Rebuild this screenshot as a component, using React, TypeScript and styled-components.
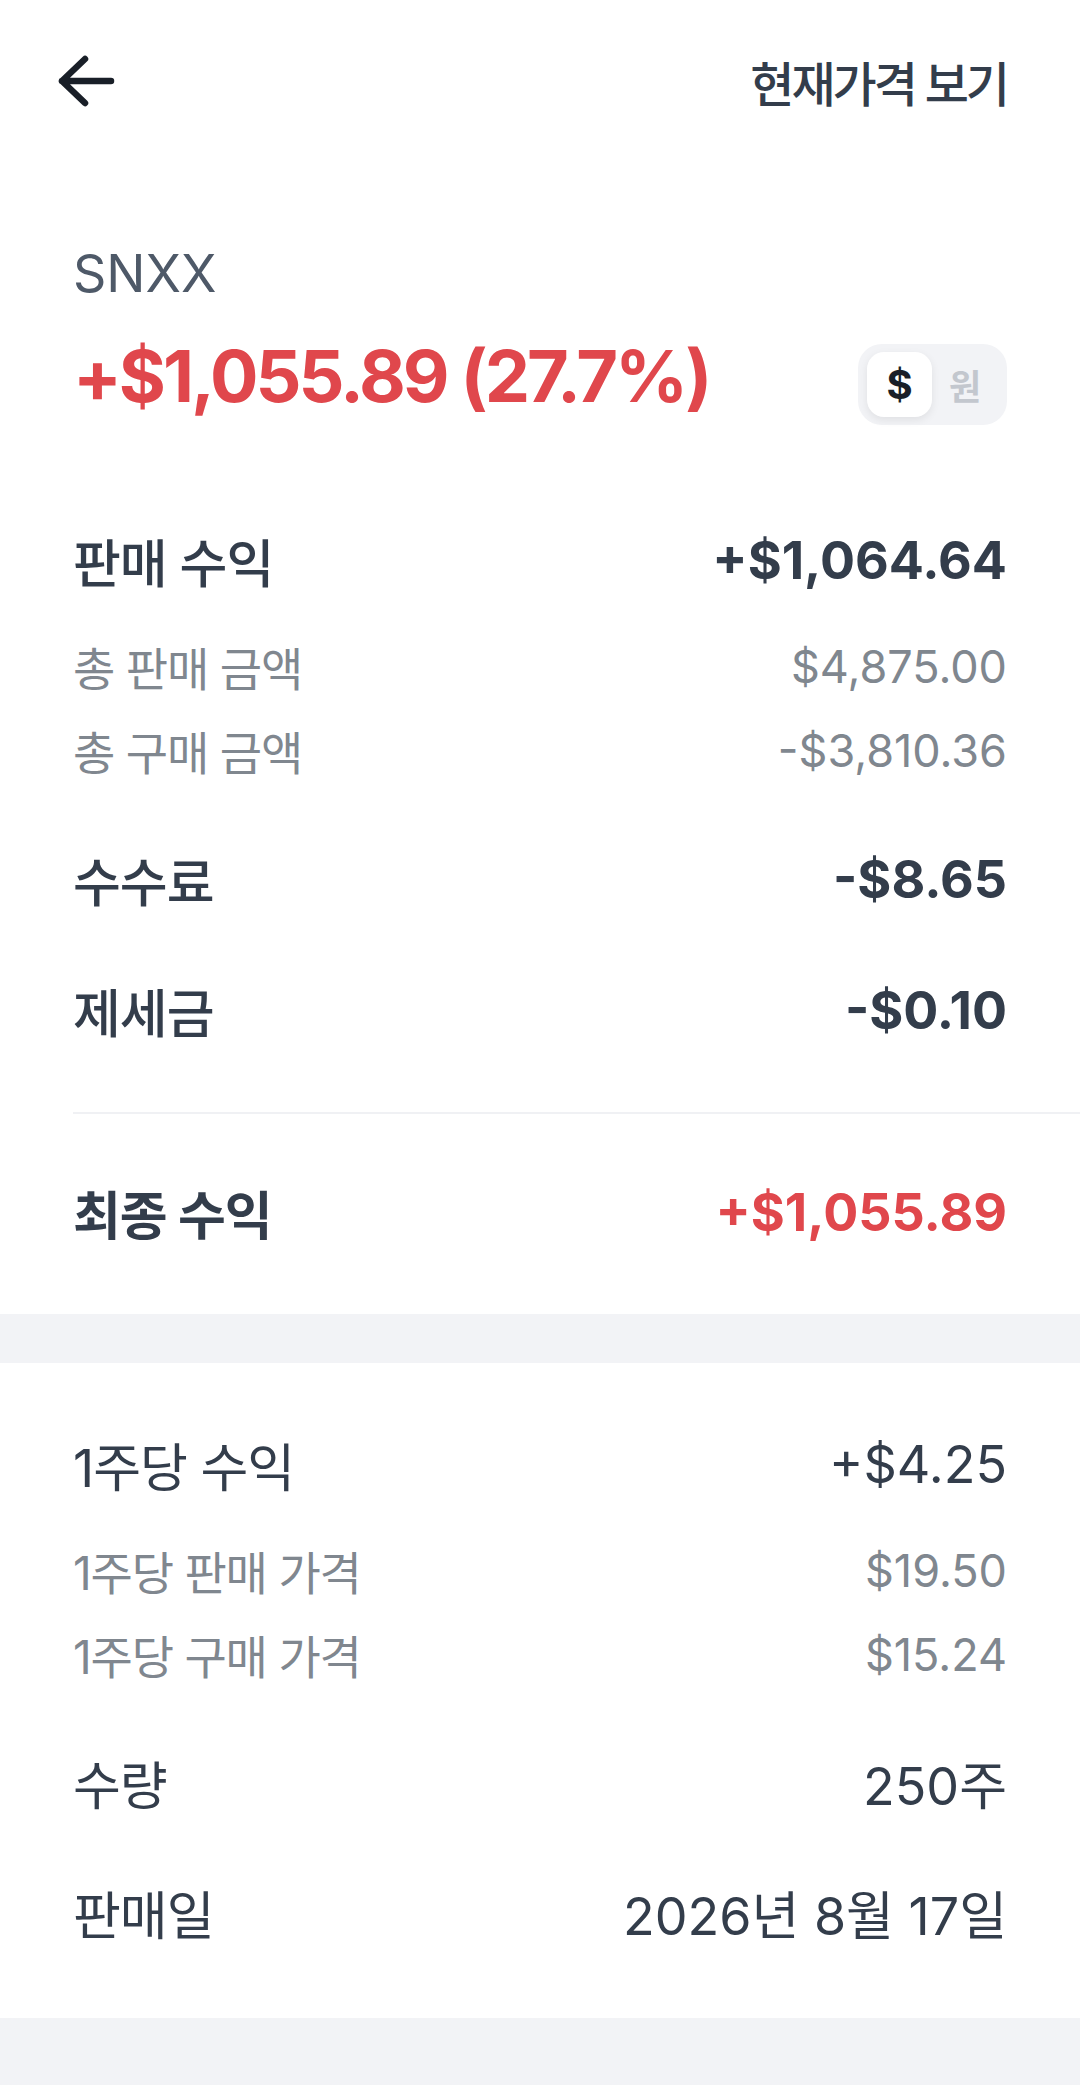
import styled, { createGlobalStyle } from "styled-components";

const GlobalStyle = createGlobalStyle`
  body {
    margin: 0;
    background: #ffffff;
    font-family: Inter, "Noto Sans CJK KR", sans-serif;
    -webkit-font-smoothing: antialiased;
  }
`;

type Block = {
  label: string;
  value: string;
  subs?: [string, string][];
};

const profitBlocks: Block[] = [
  {
    label: "판매 수익",
    value: "+$1,064.64",
    subs: [
      ["총 판매 금액", "$4,875.00"],
      ["총 구매 금액", "-$3,810.36"],
    ],
  },
  { label: "수수료", value: "-$8.65" },
  { label: "제세금", value: "-$0.10" },
];

const perShareBlocks: Block[] = [
  {
    label: "1주당 수익",
    value: "+$4.25",
    subs: [
      ["1주당 판매 가격", "$19.50"],
      ["1주당 구매 가격", "$15.24"],
    ],
  },
  { label: "수량", value: "250주" },
  { label: "판매일", value: "2026년 8월 17일" },
];

function BackArrow() {
  return (
    <svg width="62" height="54" viewBox="0 0 62 54" fill="none">
      <path
        d="M56 27H7M30 5L7 27L30 49"
        stroke="#191f28"
        strokeWidth="6.5"
        strokeLinecap="round"
        strokeLinejoin="round"
      />
    </svg>
  );
}

function BlockList({ blocks, gap, strong }: { blocks: Block[]; gap: number; strong: boolean }) {
  return (
    <Blocks $gap={gap}>
      {blocks.map((b) => (
        <div key={b.label}>
          <MainRow>
            <Label $weight={strong ? 500 : 400}>{b.label}</Label>
            <Value $weight={strong ? 700 : 400}>{b.value}</Value>
          </MainRow>
          {b.subs && (
            <SubList>
              {b.subs.map(([l, v]) => (
                <SubRow key={l}>
                  <SubLabel>{l}</SubLabel>
                  <SubValue>{v}</SubValue>
                </SubRow>
              ))}
            </SubList>
          )}
        </div>
      ))}
    </Blocks>
  );
}

export default function App() {
  return (
    <Page>
      <GlobalStyle />
      <Header>
        <BackButton aria-label="뒤로">
          <BackArrow />
        </BackButton>
        <HeaderLink>현재가격 보기</HeaderLink>
      </Header>

      <Summary>
        <Ticker>SNXX</Ticker>
        <HeadlineRow>
          <Amount>+$1,055.89 (27.7%)</Amount>
          <CurrencyToggle>
            <Knob>$</Knob>
            <Won>원</Won>
          </CurrencyToggle>
        </HeadlineRow>
      </Summary>

      <Section $top={95} $bottom={58}>
        <BlockList blocks={profitBlocks} gap={43} strong />
        <Divider />
        <TotalRow>
          <Label $weight={700}>최종 수익</Label>
          <Value $weight={700} $red>
            +$1,055.89
          </Value>
        </TotalRow>
      </Section>

      <Band $h={49} />

      <Section $top={57} $bottom={62}>
        <BlockList blocks={perShareBlocks} gap={42} strong={false} />
      </Section>

      <Band $h={80} />
    </Page>
  );
}

const Page = styled.div`
  width: 1080px;
  background: #ffffff;
  color: #333d4b;
`;

const Header = styled.header`
  height: 162px;
  display: flex;
  align-items: center;
  justify-content: space-between;
  padding: 0 73px 0 55px;
`;

const BackButton = styled.button`
  border: none;
  background: none;
  padding: 0;
  display: flex;
  cursor: pointer;
`;

const HeaderLink = styled.span`
  font-size: 48px;
  font-weight: 500;
  letter-spacing: -3px;
  color: #333d4b;
`;

const Summary = styled.section`
  padding: 80px 73px 0;
`;

const Ticker = styled.div`
  height: 64px;
  line-height: 64px;
  font-size: 52px;
  font-weight: 400;
  color: #4e5968;
`;

const HeadlineRow = styled.div`
  margin-top: 25px;
  height: 90px;
  display: flex;
  align-items: center;
  justify-content: space-between;
`;

const Amount = styled.div`
  font-size: 72px;
  line-height: 90px;
  font-weight: 700;
  letter-spacing: -3px;
  color: #e0474c;
`;

const CurrencyToggle = styled.div`
  margin-top: 16px;
  width: 149px;
  height: 81px;
  box-sizing: border-box;
  padding: 8px 9px;
  border-radius: 24px;
  background: #f2f3f6;
  display: flex;
  align-items: center;
`;

const Knob = styled.div`
  width: 65px;
  height: 65px;
  border-radius: 17px;
  background: #ffffff;
  box-shadow: 0 3px 8px rgba(0, 0, 0, 0.08);
  display: flex;
  align-items: center;
  justify-content: center;
  font-size: 40px;
  font-weight: 700;
  color: #191f28;
`;

const Won = styled.div`
  flex: 1;
  text-align: center;
  font-size: 35px;
  font-weight: 700;
  color: #c3c7ce;
`;

const Section = styled.section<{ $top: number; $bottom: number }>`
  padding: ${(p) => p.$top}px 73px ${(p) => p.$bottom}px;
`;

const Blocks = styled.div<{ $gap: number }>`
  display: flex;
  flex-direction: column;
  gap: ${(p) => p.$gap}px;
`;

const MainRow = styled.div`
  height: 88px;
  display: flex;
  align-items: center;
  justify-content: space-between;
`;

const Label = styled.span<{ $weight: number }>`
  font-size: 52px;
  font-weight: ${(p) => p.$weight};
  letter-spacing: -1px;
  color: #333d4b;
`;

const Value = styled.span<{ $weight: number; $red?: boolean }>`
  font-size: 52px;
  font-weight: ${(p) => p.$weight};
  letter-spacing: 0;
  color: ${(p) => (p.$red ? "#e0474c" : "#333d4b")};
`;

const SubList = styled.div`
  margin-top: 20px;
`;

const SubRow = styled.div`
  height: 84px;
  display: flex;
  align-items: center;
  justify-content: space-between;
`;

const SubLabel = styled.span`
  font-size: 46px;
  font-weight: 400;
  letter-spacing: -1.2px;
  color: #80878f;
`;

const SubValue = styled.span`
  font-size: 45px;
  font-weight: 400;
  color: #80878f;
`;

const Divider = styled.hr`
  margin: 58px -73px 0 0;
  border: none;
  height: 2px;
  background: #f0f1f4;
`;

const TotalRow = styled(MainRow)`
  margin-top: 54px;
`;

const Band = styled.div<{ $h: number }>`
  height: ${(p) => p.$h}px;
  background: #f2f3f6;
`;
